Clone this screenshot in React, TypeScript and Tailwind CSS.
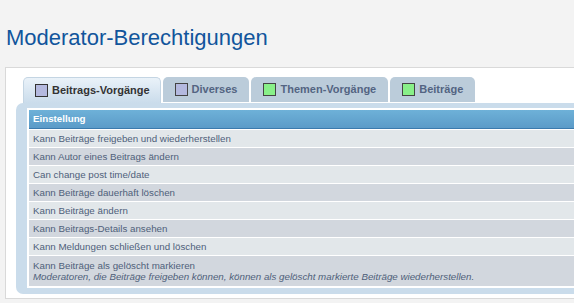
import React from "react";

const rows: { t: string; sub?: string }[] = [
  { t: "Kann Beiträge freigeben und wiederherstellen" },
  { t: "Kann Autor eines Beitrags ändern" },
  { t: "Can change post time/date" },
  { t: "Kann Beiträge dauerhaft löschen" },
  { t: "Kann Beiträge ändern" },
  { t: "Kann Beitrags-Details ansehen" },
  { t: "Kann Meldungen schließen und löschen" },
  {
    t: "Kann Beiträge als gelöscht markieren",
    sub: "Moderatoren, die Beiträge freigeben können, können als gelöscht markierte Beiträge wiederherstellen.",
  },
];

const tabs = [
  { label: "Beitrags-Vorgänge", color: "bg-[#b4b9df]", active: true },
  { label: "Diverses", color: "bg-[#b4b9df]", active: false },
  { label: "Themen-Vorgänge", color: "bg-[#88f088]", active: false },
  { label: "Beiträge", color: "bg-[#88f088]", active: false },
];

export default function App() {
  return (
    <div className="w-[574px] h-[303px] overflow-hidden bg-[#f3f3f3] font-['Liberation_Sans',Arial,sans-serif]">
      <h1 className="pt-[25px] pl-[6px] text-[22px] leading-[26px] font-normal text-[#11559c]">
        Moderator-Berechtigungen
      </h1>
      <div className="mt-[16px] ml-[5px] w-[620px] h-[232px] border border-[#d9d9d9] bg-white pt-[9px] pl-[10px]">
        <div className="flex items-start gap-[2px] pl-[7px] h-[26px]">
          {tabs.map((tab) =>
            tab.active ? (
              <div
                key={tab.label}
                className="flex items-center h-[26px] pl-[11px] pr-[10px] pb-[1px] rounded-t-[5px] bg-gradient-to-b from-[#eaf2f9] to-[#cadceb] border-l border-t border-r border-[#c4d5e3]"
              >
                <span className={`w-[13px] h-[13px] border border-[#333] ${tab.color}`} />
                <span className="ml-[4px] text-[11px] font-bold text-[#333]">{tab.label}</span>
              </div>
            ) : (
              <div
                key={tab.label}
                className="flex items-center h-[25px] pl-[12px] pr-[12px] rounded-t-[5px] bg-[#bbccda]"
              >
                <span className={`w-[13px] h-[13px] border border-[#444] ${tab.color}`} />
                <span className="ml-[4px] text-[11px] font-bold text-[#536482]">{tab.label}</span>
              </div>
            )
          )}
        </div>
        <div className="bg-[#cadceb] rounded-l-[7px] pt-[5px] pb-[6px] pl-[11px]">
          <div className="bg-white p-[2px] flex flex-col gap-[1px]">
            <div className="h-[19px] flex items-center pl-[4px] bg-gradient-to-b from-[#6eb1d8] to-[#5b9bc8] border-b border-[#3b7aad] text-[9.75px] font-bold text-white">
              Einstellung
            </div>
            {rows.map((r, i) => (
              <div
                key={i}
                className={`${i % 2 === 0 ? "bg-[#e2e7ea]" : "bg-[#d2d7de]"} pl-[4px] text-[9.75px] text-[#4f5f7a] ${
                  r.sub ? "pt-[4px] pb-[4px] leading-[11px]" : "h-[17px] leading-[17px]"
                }`}
              >
                <div>{r.t}</div>
                {r.sub && <div className="italic">{r.sub}</div>}
              </div>
            ))}
          </div>
        </div>
      </div>
    </div>
  );
}
